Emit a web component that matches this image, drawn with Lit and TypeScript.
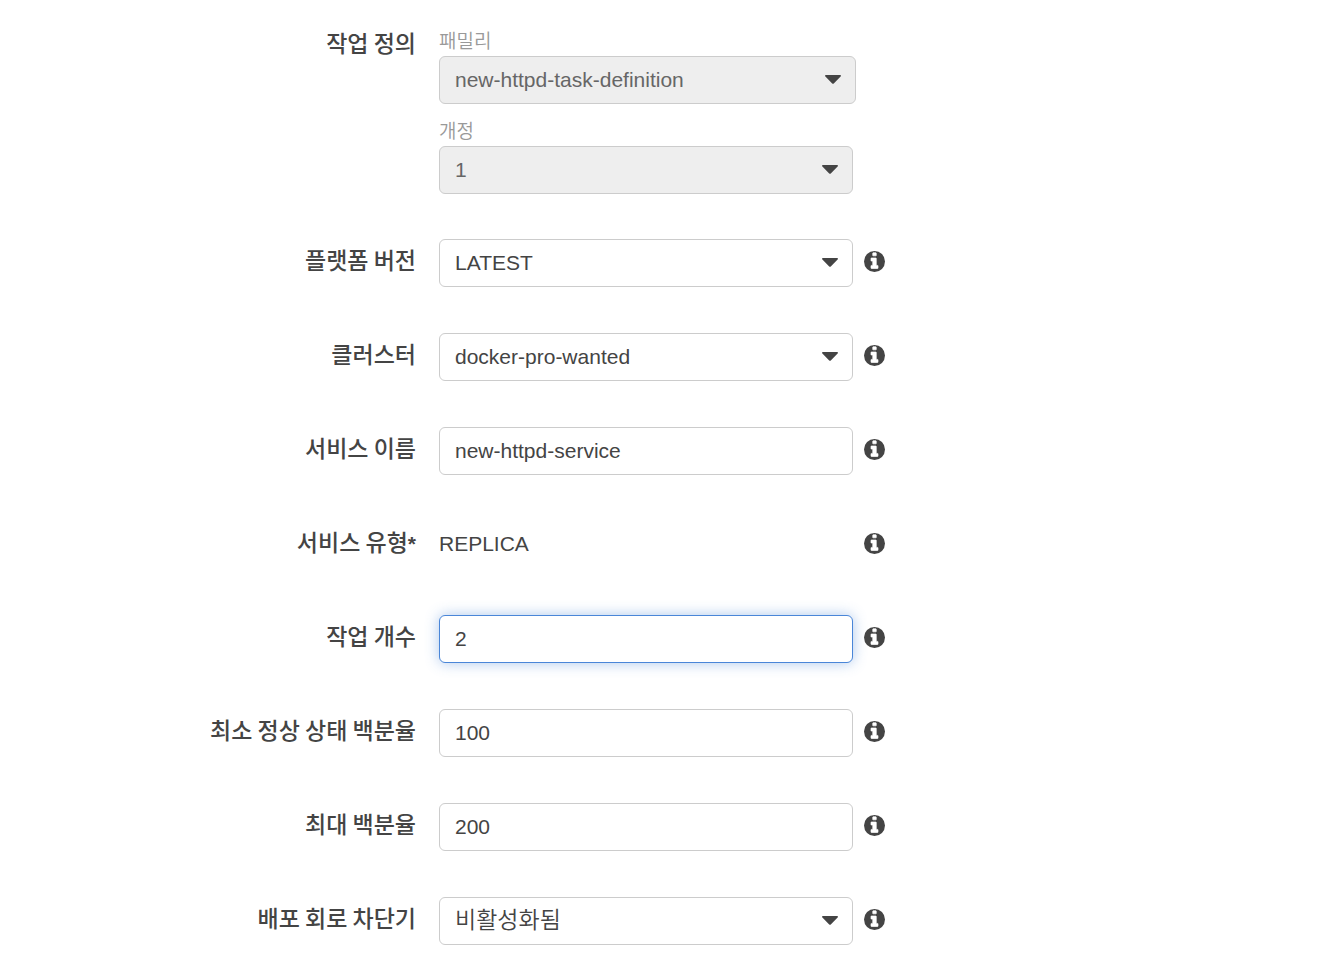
import { LitElement, html, css, nothing } from "lit";
import { customElement, property, state } from "lit/decorators.js";
import { classMap } from "lit/directives/class-map.js";

type Kind = "select" | "input" | "text";

interface Field {
  id: string;
  label: string;
  kind: Kind;
  value: string;
  required?: boolean;
  active?: boolean;
}

const FIELDS: Field[] = [
  { id: "platform", label: "플랫폼 버전", kind: "select", value: "LATEST" },
  { id: "cluster", label: "클러스터", kind: "select", value: "docker-pro-wanted" },
  { id: "service-name", label: "서비스 이름", kind: "input", value: "new-httpd-service" },
  { id: "service-type", label: "서비스 유형", kind: "text", value: "REPLICA", required: true },
  { id: "task-count", label: "작업 개수", kind: "input", value: "2", active: true },
  { id: "min-percent", label: "최소 정상 상태 백분율", kind: "input", value: "100" },
  { id: "max-percent", label: "최대 백분율", kind: "input", value: "200" },
  { id: "breaker", label: "배포 회로 차단기", kind: "select", value: "비활성화됨" },
];

@customElement("info-button")
class InfoButton extends LitElement {
  @property() topic = "";

  static styles = css`
    :host {
      display: block;
    }
    .info {
      display: block;
      padding: 0;
      border: 0;
      background: none;
      color: #444;
      cursor: pointer;
    }
    .icon {
      display: block;
      width: 21px;
      height: 21px;
    }
  `;

  render() {
    return html`<button class="info" type="button" aria-label=${this.topic}>
      <svg class="icon" viewBox="128 128 1536 1536" aria-hidden="true">
        <circle cx="896" cy="896" r="768" fill="currentColor" />
        <path
          d="M1152 1376v-160q0-14-9-23t-23-9h-96v-512q0-14-9-23t-23-9h-320q-14 0-23 9t-9 23v160q0 14 9 23t23 9h96v320h-96q-14 0-23 9t-9 23v160q0 14 9 23t23 9h448q14 0 23-9t9-23zM1024 450v-160q0-14-9-23t-23-9h-192q-14 0-23 9t-9 23v160q0 14 9 23t23 9h192q14 0 23-9t9-23z"
          fill="#fff"
          stroke="#fff"
          stroke-width="50"
        />
      </svg>
    </button>`;
  }
}

@customElement("app-root")
class AppRoot extends LitElement {
  @state() private activeId = FIELDS.find((f) => f.active)?.id ?? "";

  static styles = css`
    :host {
      display: block;
      background: #fff;
      color: #444;
      font-family: "Liberation Sans", "Noto Sans CJK KR", sans-serif;
      font-size: 21px;
    }
    .form {
      display: flex;
      flex-direction: column;
      padding: 28px 0 24px;
    }
    .row {
      display: grid;
      grid-template-columns: minmax(0, 416px) minmax(0, 414px) 21px;
      column-gap: 23px;
      align-items: start;
      min-height: 48px;
      margin-bottom: 46px;
    }
    .row:last-child {
      margin-bottom: 0;
    }
    .row.definition {
      margin-bottom: 45px;
    }
    .label {
      padding-top: 6px;
      font-family: "Noto Sans CJK KR", sans-serif;
      font-size: 23px;
      font-weight: 500;
      line-height: 28px;
      text-align: right;
    }
    .definition .label {
      padding-top: 0;
    }
    .required {
      font-family: "Liberation Sans", sans-serif;
      font-size: 21px;
      font-weight: 700;
    }
    .stack {
      display: flex;
      flex-direction: column;
      gap: 14px;
    }
    .hint {
      display: block;
      margin-bottom: 4px;
      color: #999;
      font-family: "Noto Sans CJK KR", sans-serif;
      font-size: 19px;
      font-weight: 350;
      line-height: 24px;
    }
    .picker {
      display: grid;
      grid-template-columns: minmax(0, 1fr);
      align-items: center;
    }
    .picker.wide {
      margin-right: -3px;
    }
    .control {
      box-sizing: border-box;
      width: 100%;
      height: 48px;
      margin: 0;
      padding: 0 15px;
      border: 1px solid #ccc;
      border-radius: 6px;
      outline: none;
      appearance: none;
      background: #fff;
      color: #444;
      font: inherit;
    }
    .picker .control {
      grid-area: 1 / 1;
      padding: 0 40px 2px 15px;
    }
    .picker .control.korean {
      padding-bottom: 6px;
      font-family: "Noto Sans CJK KR", sans-serif;
      font-size: 23px;
      font-weight: 350;
    }
    .control:disabled {
      background: #eee;
      color: #666;
      opacity: 1;
    }
    .control.active {
      border-color: #4a86d8;
      box-shadow: 0 0 14px rgba(74, 134, 216, 0.45);
    }
    .caret {
      grid-area: 1 / 1;
      justify-self: end;
      width: 16px;
      height: 9px;
      margin-right: 15px;
      margin-bottom: 1px;
      pointer-events: none;
    }
    .static {
      display: block;
      line-height: 46px;
    }
    info-button {
      margin-top: 12px;
      margin-left: -12px;
    }
    @media (max-width: 640px) {
      .form {
        padding: 24px 16px;
      }
      .row {
        grid-template-columns: minmax(0, 1fr) 21px;
      }
      .label {
        grid-column: 1 / -1;
        text-align: left;
      }
    }
  `;

  private caret() {
    return html`<svg class="caret" viewBox="0 0 16 9" fill="#444" aria-hidden="true">
      <path d="M1 0h14q1 0 1 .8 0 .4-.4.8L8.8 8.5q-.8.7-1.6 0L.4 1.6Q0 1.2 0 .8 0 0 1 0z" />
    </svg>`;
  }

  private picker(id: string, value: string, disabled = false, wide = false) {
    const korean = /[\uac00-\ud7a3]/.test(value);
    return html`<div class=${classMap({ picker: true, wide })}>
      <select id=${id} class=${classMap({ control: true, korean })} ?disabled=${disabled}>
        <option>${value}</option>
      </select>
      ${this.caret()}
    </div>`;
  }

  private control(f: Field) {
    if (f.kind === "select") return this.picker(f.id, f.value);
    if (f.kind === "text") return html`<output id=${f.id} class="static">${f.value}</output>`;
    return html`<input
      id=${f.id}
      class=${classMap({ control: true, active: this.activeId === f.id })}
      type="text"
      .value=${f.value}
      @focus=${() => (this.activeId = f.id)}
    />`;
  }

  render() {
    return html`<form class="form">
      <div class="row definition" role="group" aria-labelledby="definition">
        <span id="definition" class="label">작업 정의</span>
        <div class="stack">
          <div>
            <label class="hint" for="family">패밀리</label>
            ${this.picker("family", "new-httpd-task-definition", true, true)}
          </div>
          <div>
            <label class="hint" for="revision">개정</label>
            ${this.picker("revision", "1", true)}
          </div>
        </div>
      </div>
      ${FIELDS.map(
        (f) => html`<div class="row">
          <label class="label" for=${f.id}
            >${f.label}${f.required ? html`<span class="required">*</span>` : nothing}</label
          >
          ${this.control(f)}
          <info-button topic=${f.label}></info-button>
        </div>`
      )}
    </form>`;
  }
}
